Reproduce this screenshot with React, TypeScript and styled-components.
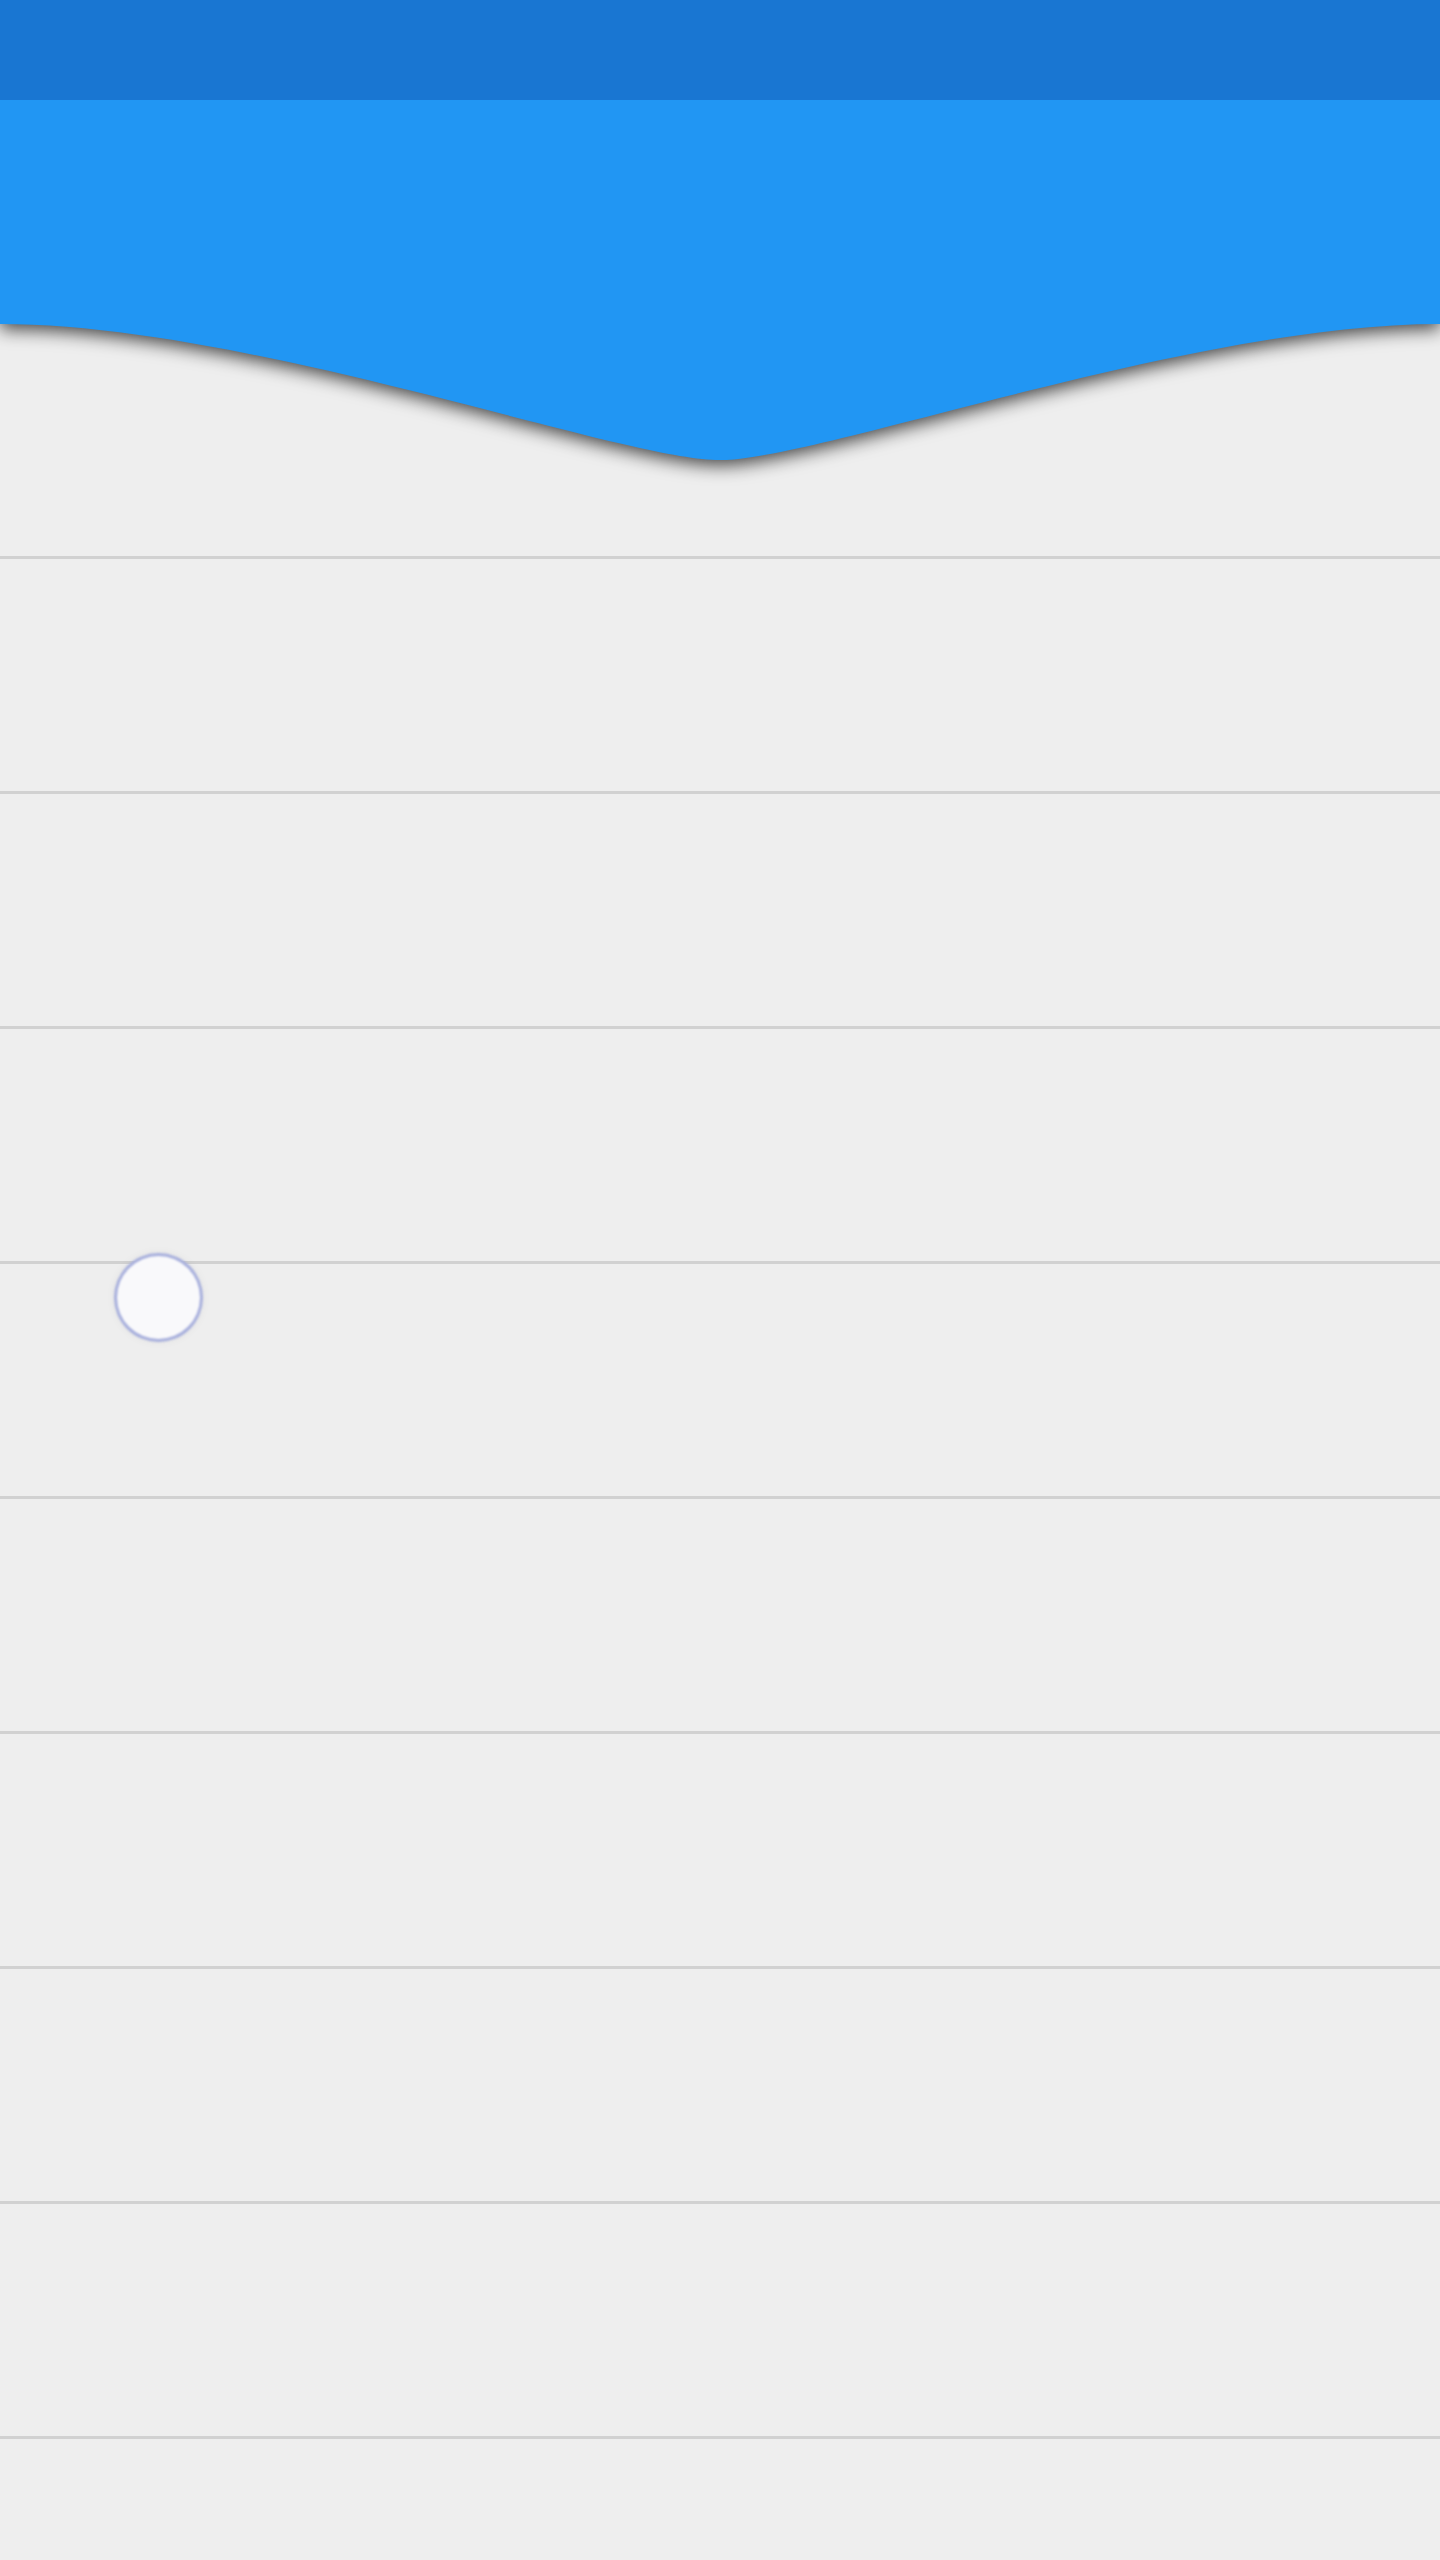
import React from "react";
import styled, { createGlobalStyle } from "styled-components";

const GlobalStyle = createGlobalStyle`
  html, body {
    margin: 0;
    padding: 0;
    background: #eeeeee;
    font-family: Roboto, "Liberation Sans", sans-serif;
  }
  * { box-sizing: border-box; }
`;

const Page = styled.div`
  position: relative;
  width: 100%;
  min-height: 2560px;
  background: #eeeeee;
  overflow: hidden;
`;

const Header = styled.header`
  position: relative;
  z-index: 2;
  display: flex;
  flex-direction: column;
  filter: drop-shadow(0 5px 9px rgba(0, 0, 0, 0.72));
`;

const StatusBar = styled.div`
  height: 100px;
  background: #1976d2;
`;

const AppBar = styled.div`
  height: 224px;
  background: #2196f3;
`;

const WaveSvg = styled.svg`
  position: absolute;
  left: 0;
  top: calc(100% - 1px);
  width: 100%;
  height: 137px;
  display: block;
  overflow: visible;
`;

const List = styled.div`
  display: flex;
  flex-direction: column;
`;

const Row = styled.div`
  height: 235px;
  border-bottom: 3px solid #d1d1d1;
`;

const Handle = styled.div`
  position: absolute;
  z-index: 3;
  left: 114px;
  top: 1253px;
  width: 89px;
  height: 89px;
  border-radius: 50%;
  background: #f9f9fb;
  border: 3px solid rgba(121, 134, 203, 0.65);
  filter: blur(1px);
  box-shadow: 0 0 10px rgba(0, 0, 0, 0.05);
`;

const Wave: React.FC = () => (
  <WaveSvg viewBox="0 0 1440 137" preserveAspectRatio="none" aria-hidden>
    <path
      d="M0,0 L0,1 C250,1 620,137 720,137 C820,137 1190,1 1440,1 L1440,0 Z"
      fill="#2196f3"
    />
  </WaveSvg>
);

export default function App() {
  const rows = Array.from({ length: 10 }, (_, i) => i);
  return (
    <>
      <GlobalStyle />
      <Page>
        <Header>
          <StatusBar />
          <AppBar />
          <Wave />
        </Header>
        <List>
          {rows.map((i) => (
            <Row key={i} />
          ))}
        </List>
        <Handle />
      </Page>
    </>
  );
}
